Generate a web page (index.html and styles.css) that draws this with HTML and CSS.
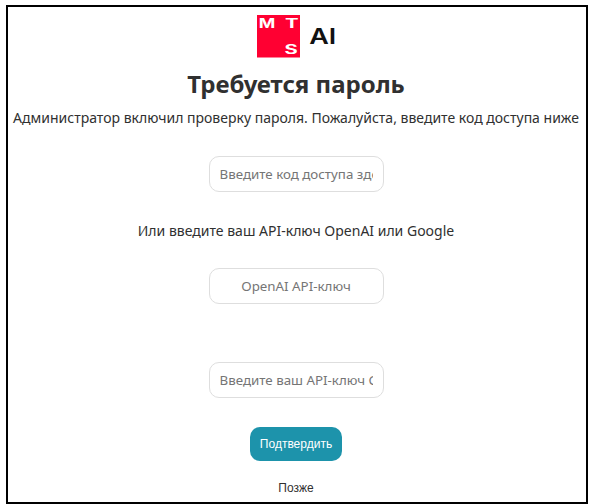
FILE: index.html
```html
<!DOCTYPE html>
<html lang="ru">
<head>
<meta charset="utf-8">
<title>Требуется пароль</title>
<link rel="stylesheet" href="styles.css">
</head>
<body>
<main class="auth">
  <svg class="logo" width="80" height="43" viewBox="0 0 80 43" role="img" aria-label="MTS AI">
    <rect width="43" height="42.5" fill="#ff0032"/>
    <g class="logo-letters" fill="#fff">
      <text x="1.7" y="13" textLength="16.5" lengthAdjust="spacingAndGlyphs">M</text>
      <text x="27.9" y="13" textLength="13.6" lengthAdjust="spacingAndGlyphs">T</text>
      <text x="27.4" y="39" textLength="13.2" lengthAdjust="spacingAndGlyphs">S</text>
    </g>
    <text class="logo-ai" x="52.2" y="29.2" textLength="27" lengthAdjust="spacingAndGlyphs">AI</text>
  </svg>
  <h1 class="title">Требуется пароль</h1>
  <p class="tips">Администратор включил проверку пароля. Пожалуйста, введите код доступа ниже</p>
  <input class="field" type="text" placeholder="Введите код доступа здесь">
  <p class="tips tips-second">Или введите ваш API-ключ OpenAI или Google</p>
  <input class="field" type="text" placeholder="OpenAI API-ключ">
  <input class="field field-google" type="text" placeholder="Введите ваш API-ключ Google">
  <div class="actions">
    <button class="button button-primary">Подтвердить</button>
    <button class="button">Позже</button>
  </div>
</main>
</body>
</html>
```
FILE: styles.css
```css
* {
  box-sizing: border-box;
}

body {
  margin: 0;
  padding: 5px 4px 0 6px;
  background: #fff;
  color: #303030;
  font-family: "Noto Sans", sans-serif;
  overflow: hidden;
}

.auth {
  display: flex;
  flex-direction: column;
  align-items: center;
  height: 499px;
  padding: 8px 2px 0 0;
  border: 2px solid #000;
}

.logo {
  display: block;
  flex: none;
  margin-left: 2px;
}

.logo-letters {
  font: 700 12.6px Inter, sans-serif;
}

.logo-ai {
  font: 600 22px Inter, sans-serif;
  fill: #111;
}

.title {
  margin: 9px 0 0;
  font-size: 24px;
  line-height: 33px;
  font-weight: 700;
}

.tips {
  margin: 8px 0 0;
  font-size: 14px;
  line-height: 20px;
  white-space: nowrap;
}

.tips-second {
  margin-top: 29px;
}

.field {
  width: 175px;
  height: 36px;
  flex: none;
  padding: 0 10px;
  border: 1px solid #dedede;
  border-radius: 10px;
  background: #fff;
  font: 13.333px "Noto Sans", sans-serif;
  text-align: center;
}

.tips + .field {
  margin-top: 28px;
}

.tips-second + .field {
  margin-top: 27px;
}

.field-google {
  margin-top: 58px;
}

.field::placeholder {
  color: #757575;
}

.actions {
  display: flex;
  flex-direction: column;
  align-items: center;
  gap: 10px;
  margin-top: 29px;
}

.button {
  height: 34px;
  padding: 0 9.6px;
  border: 0;
  border-radius: 10px;
  background: transparent;
  color: #303030;
  font: 12px "Liberation Sans", sans-serif;
}

.button-primary {
  background: #1d93ab;
  color: #fff;
}
```
